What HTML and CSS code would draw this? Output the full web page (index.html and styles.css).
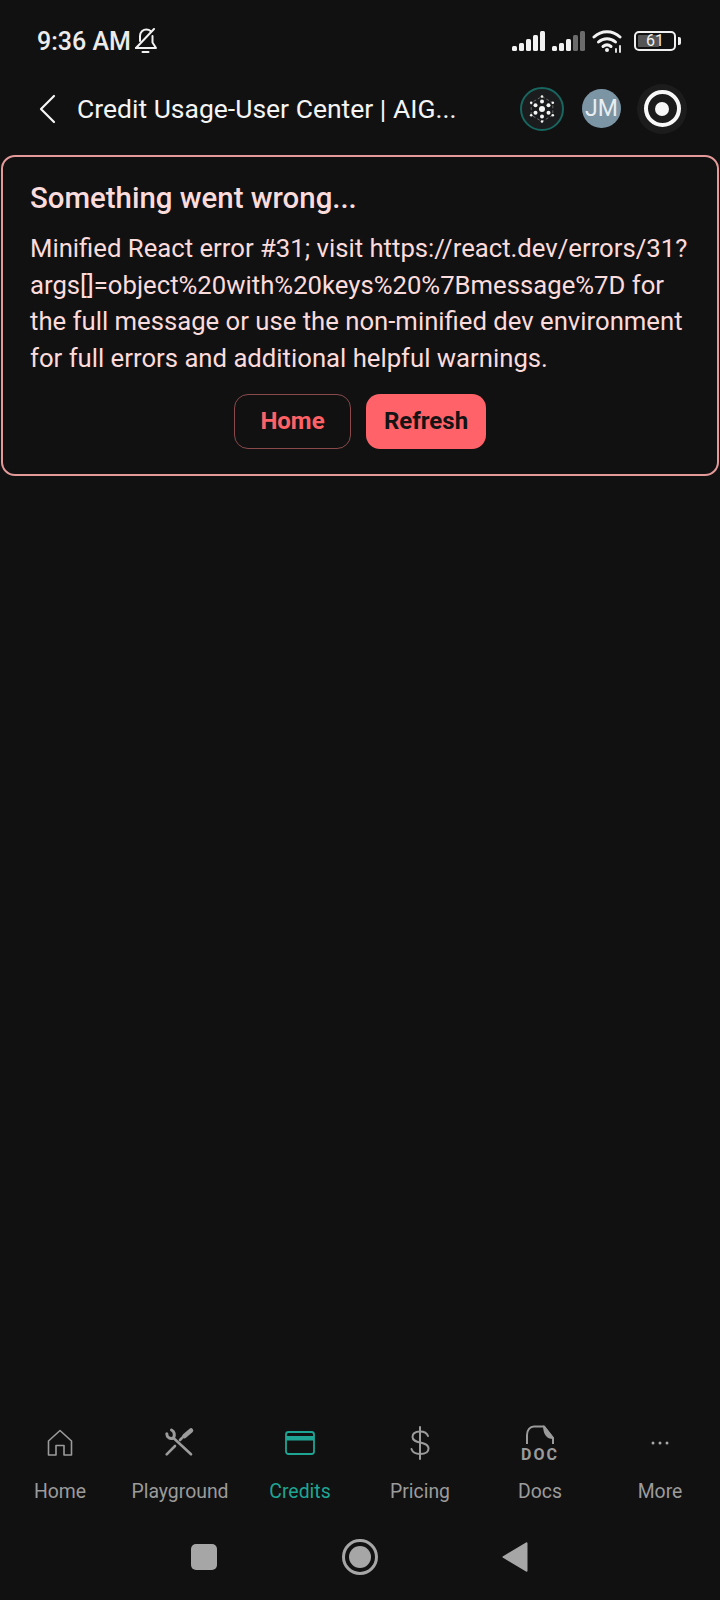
FILE: index.html
```html
<!DOCTYPE html>
<html lang="en">
<head>
    <meta charset="UTF-8">
    <meta name="viewport" content="width=device-width, initial-scale=1.0">
    <title>Credit Usage-User Center</title>
    <link rel="stylesheet" href="styles.css">
</head>
<body>
    <div class="status-bar">
        <div class="status-left">
            <span class="clock">9:36 AM</span>
            <svg class="bell" width="26" height="26" viewBox="0 0 26 26" fill="none" stroke="#f2f2f2" stroke-width="2" stroke-linejoin="round" stroke-linecap="round">
                <path d="M7 13V8C7 4 10 1.500 13.500 1.500c1.500 0 3 .5 4 1.500"/>
                <path d="M19.500 8v6.500L23 20H3"/>
                <path d="M21 1 3 20"/>
                <path d="M9.500 24h6"/>
            </svg>
        </div>
        <div class="status-right">
            <svg width="33" height="21" viewBox="0 0 33 21" fill="#f2f2f2">
                <rect x="0" y="15" width="5" height="5" rx="1.500"/>
                <rect x="7" y="12" width="5" height="8" rx="1.500"/>
                <rect x="14" y="8" width="5" height="12" rx="1.500"/>
                <rect x="21" y="4" width="5" height="16" rx="1.500"/>
                <rect x="28" y="0" width="5" height="20" rx="1.500"/>
            </svg>
            <svg width="33" height="21" viewBox="0 0 33 21" fill="#f2f2f2">
                <rect x="0" y="15" width="5" height="5" rx="1.500"/>
                <rect x="7" y="12" width="5" height="8" rx="1.500"/>
                <rect x="14" y="8" width="5" height="12" rx="1.500"/>
                <rect x="21" y="4" width="5" height="16" rx="1.500" fill="#6b6b6b"/>
                <rect x="28" y="0" width="5" height="20" rx="1.500" fill="#6b6b6b"/>
            </svg>
            <svg width="32" height="24" viewBox="0 0 32 24" fill="none" stroke="#f2f2f2" stroke-width="3" stroke-linecap="round">
                <path d="M2 8C9.500 1 20.500 1 28 8"/>
                <path d="M6.500 13c5-4.500 12-4.500 17 0"/>
                <path d="M11 17.500c2.500-2 5.500-2 8 0"/>
                <circle cx="15" cy="21" r="2" fill="#f2f2f2" stroke="none"/>
                <path d="M24 20v3M28 17v6" stroke-width="1.800"/>
            </svg>
            <div class="battery">
                <div class="battery-body">
                    <div class="battery-level"></div>
                    <span class="battery-text">61</span>
                </div>
                <div class="battery-tip"></div>
            </div>
        </div>
    </div>

    <header class="top-bar">
        <svg class="back" width="20" height="30" viewBox="0 0 20 30" fill="none" stroke="#f5f5f5" stroke-width="2.200" stroke-linecap="round" stroke-linejoin="round">
            <path d="M16 2 3 15l13 13"/>
        </svg>
        <h1 class="page-title">Credit Usage-User Center | AIG...</h1>
        <div class="top-actions">
            <div class="app-logo">
                <svg width="36" height="36" viewBox="0 0 36 36" fill="#f5f5f5">
                    <path d="M18 5.500 28.800 11.800V24.200L18 30.500 7.200 24.200V11.800z" fill="none" stroke="#8a8a8a" stroke-width=".7" stroke-dasharray="3 2"/>
                    <circle cx="18" cy="18" r="3"/>
                    <circle cx="18" cy="10.500" r="2"/>
                    <circle cx="11.500" cy="14.200" r="2"/>
                    <circle cx="24.500" cy="14.200" r="2"/>
                    <circle cx="11.500" cy="21.800" r="2"/>
                    <circle cx="24.500" cy="21.800" r="2"/>
                    <circle cx="18" cy="25.500" r="2"/>
                    <circle cx="18" cy="5.500" r="1.300"/>
                    <circle cx="7.200" cy="11.800" r="1.300"/>
                    <circle cx="28.800" cy="11.800" r="1.300"/>
                    <circle cx="7.200" cy="24.200" r="1.300"/>
                    <circle cx="28.800" cy="24.200" r="1.300"/>
                    <circle cx="18" cy="30.500" r="1.300"/>
                </svg>
            </div>
            <div class="avatar">JM</div>
            <div class="record">
                <div class="record-ring"><div class="record-dot"></div></div>
            </div>
        </div>
    </header>

    <main class="content">
        <section class="error-card">
            <h2>Something went wrong...</h2>
            <p>Minified React error #31; visit https://react.dev/errors/31?<br>args[]=object%20with%20keys%20%7Bmessage%7D for<br>the full message or use the non-minified dev environment<br>for full errors and additional helpful warnings.</p>
            <div class="buttons">
                <button class="btn-outline">Home</button>
                <button class="btn-fill">Refresh</button>
            </div>
        </section>
    </main>

    <nav class="tab-bar">
        <a class="tab">
            <svg width="30" height="30" viewBox="0 0 30 30" fill="none" stroke="#9b9b9b" stroke-width="1.600" stroke-linejoin="round">
                <path d="M3.500 13 15 2.500 26.500 13v14H19V17.500h-8V27H3.500z"/>
            </svg>
            <span>Home</span>
        </a>
        <a class="tab">
            <svg width="30" height="30" viewBox="0 0 30 30" fill="none" stroke="#9b9b9b" stroke-width="2.600" stroke-linecap="round" stroke-linejoin="round">
                <path d="M1.800 5.800C1.800 9.500 5 11.500 8.500 10 10 7 9.500 3.500 6.500 2" stroke-width="3"/>
                <path d="M8.500 10 26 26.300"/>
                <path d="M1.700 26.300 10 18"/>
                <path d="M15 12l3.300-3.300"/>
                <path d="M19.500 8l6.500-5.500" stroke-width="4.500"/>
            </svg>
            <span>Playground</span>
        </a>
        <a class="tab tab-active">
            <svg width="30" height="30" viewBox="0 0 30 30" fill="none" stroke="#1fa593" stroke-width="1.800" stroke-linejoin="round">
                <rect x="1" y="4" width="28" height="22" rx="2.500"/>
                <rect x="1" y="8" width="28" height="4.500" fill="#1fa593" stroke="none"/>
            </svg>
            <span>Credits</span>
        </a>
        <a class="tab">
            <svg width="30" height="34" viewBox="0 0 30 34" fill="none" stroke="#9b9b9b" stroke-width="2" stroke-linecap="round">
                <path d="M23 10c-1-3-4-4.500-8-4.500-4.500 0-7.500 2-7.500 5.500 0 7.500 16 3.500 16 11.500 0 3.500-3.500 5.500-8.500 5.500-4.500 0-7.500-2-8.500-5"/>
                <path d="M15 1v32"/>
            </svg>
            <span>Pricing</span>
        </a>
        <a class="tab">
            <svg width="32" height="36" viewBox="0 0 32 36" fill="none" stroke="#9b9b9b" stroke-width="2" stroke-linejoin="round">
                <path d="M3 19V10C3 5 6 1.500 10 1.500H20L29 13V19"/>
                <path d="M20 1.500 29 13C25 13 20.500 11 20 1.500z" fill="#9b9b9b"/>
                <text class="doc-label" x="16" y="35" text-anchor="middle">DOC</text>
            </svg>
            <span>Docs</span>
        </a>
        <a class="tab">
            <svg width="30" height="30" viewBox="0 0 30 30" fill="#a6a6a6">
                <circle cx="8" cy="15" r="1.500"/>
                <circle cx="15" cy="15" r="1.500"/>
                <circle cx="22" cy="15" r="1.500"/>
            </svg>
            <span>More</span>
        </a>
    </nav>

    <div class="system-nav">
        <div class="sys-square"></div>
        <div class="sys-home"><div class="sys-home-dot"></div></div>
        <svg width="26" height="32" viewBox="0 0 26 32" fill="#a6a6a6">
            <path d="M24 1.500a1 1 0 0 1 1.500 1v27a1 1 0 0 1-1.500 1L1.500 17a1 1 0 0 1 0-2z"/>
        </svg>
    </div>
</body>
</html>
```

FILE: styles.css
```css
* {
    box-sizing: border-box;
}
body {
    margin: 0;
    width: 720px;
    height: 1600px;
    display: flex;
    flex-direction: column;
    background-color: #111112;
    font-family: Roboto, "Liberation Sans", sans-serif;
    color: #f5f5f5;
    overflow: hidden;
}
.status-bar {
    height: 72px;
    padding: 10px 39px 0 37px;
    display: flex;
    justify-content: space-between;
    align-items: center;
    flex-shrink: 0;
}
.status-left {
    display: flex;
    align-items: center;
    gap: 2px;
}
.clock {
    font-size: 25px;
    font-weight: 500;
    color: #ececec;
}
.status-right {
    display: flex;
    align-items: center;
    gap: 7px;
}
.battery {
    display: flex;
    align-items: center;
    gap: 2px;
    margin-left: 3px;
}
.battery-body {
    width: 42px;
    height: 20px;
    border: 2px solid #f0f0f0;
    border-radius: 5px;
    position: relative;
    padding: 2px;
}
.battery-level {
    width: 61%;
    height: 100%;
    background: #555;
    border-radius: 1px;
}
.battery-text {
    position: absolute;
    top: 0;
    left: 0;
    width: 100%;
    text-align: center;
    font-size: 16px;
    line-height: 16px;
    color: #f0f0f0;
}
.battery-tip {
    width: 3px;
    height: 8px;
    background: #f0f0f0;
    border-radius: 0 2px 2px 0;
}
.top-bar {
    height: 83px;
    padding: 0 33px 10px 38px;
    display: flex;
    align-items: center;
    flex-shrink: 0;
}
.page-title {
    margin: 0 0 0 19px;
    font-size: 26.500px;
    font-weight: 400;
    white-space: nowrap;
    color: #f5f5f5;
}
.top-actions {
    margin-left: auto;
    display: flex;
    align-items: center;
}
.app-logo {
    width: 44px;
    height: 44px;
    border-radius: 50%;
    border: 2px solid #17665f;
    background: #1b1c1d;
    display: flex;
    align-items: center;
    justify-content: center;
}
.avatar {
    width: 39px;
    height: 39px;
    margin-left: 18px;
    border-radius: 50%;
    background: #7b95a5;
    color: #e9edf0;
    font-size: 23px;
    text-align: center;
    line-height: 39px;
}
.record {
    width: 50px;
    height: 50px;
    margin-left: 16px;
    border-radius: 50%;
    background: #1c1c1d;
    display: flex;
    align-items: center;
    justify-content: center;
}
.record-ring {
    width: 37px;
    height: 37px;
    border: 4px solid #f8f8f8;
    border-radius: 50%;
    display: flex;
    align-items: center;
    justify-content: center;
}
.record-dot {
    width: 14px;
    height: 14px;
    background: #f8f8f8;
    border-radius: 50%;
}
.content {
    flex: 1;
}
.error-card {
    margin: 0 1px;
    height: 321px;
    padding: 25px 27px 0;
    border: 2px solid #e59a9a;
    border-radius: 14px;
}
.error-card h2 {
    margin: 0;
    font-size: 29.400px;
    font-weight: 500;
    line-height: 32px;
    color: #fbdcdc;
}
.error-card p {
    margin: 16px 0 0;
    font-size: 25.700px;
    line-height: 36.700px;
    color: #fbdcdc;
    white-space: nowrap;
}
.buttons {
    margin-top: 17px;
    display: flex;
    justify-content: center;
    gap: 15px;
}
.buttons button {
    height: 55px;
    font-family: inherit;
    font-size: 24px;
    font-weight: 700;
    border-radius: 14px;
}
.btn-outline {
    width: 117px;
    background: transparent;
    border: 1px solid #8a4a4b;
    color: #ff6266;
}
.btn-fill {
    width: 120px;
    background: #ff6268;
    border: none;
    color: #141414;
}
.tab-bar {
    display: flex;
    height: 108px;
    padding-top: 5px;
    flex-shrink: 0;
}
.tab {
    flex: 1;
    display: flex;
    flex-direction: column;
    align-items: center;
    color: #9b9b9b;
    font-size: 19.400px;
}
.tab svg {
    height: 36px;
    margin-bottom: 19px;
    overflow: visible;
}
.doc-label {
    font-size: 16px;
    font-weight: 700;
    letter-spacing: 2px;
    fill: #9b9b9b;
    stroke: none;
}
.tab-active {
    color: #1fa593;
}
.system-nav {
    height: 72px;
    flex-shrink: 0;
    padding: 0 192px 14px 191px;
    display: flex;
    justify-content: space-between;
    align-items: center;
}
.sys-square {
    width: 26px;
    height: 26px;
    background: #a6a6a6;
    border-radius: 5px;
}
.sys-home {
    width: 36px;
    height: 36px;
    border: 3px solid #a6a6a6;
    border-radius: 50%;
    display: flex;
    align-items: center;
    justify-content: center;
}
.sys-home-dot {
    width: 22px;
    height: 22px;
    background: #a6a6a6;
    border-radius: 50%;
}
```
